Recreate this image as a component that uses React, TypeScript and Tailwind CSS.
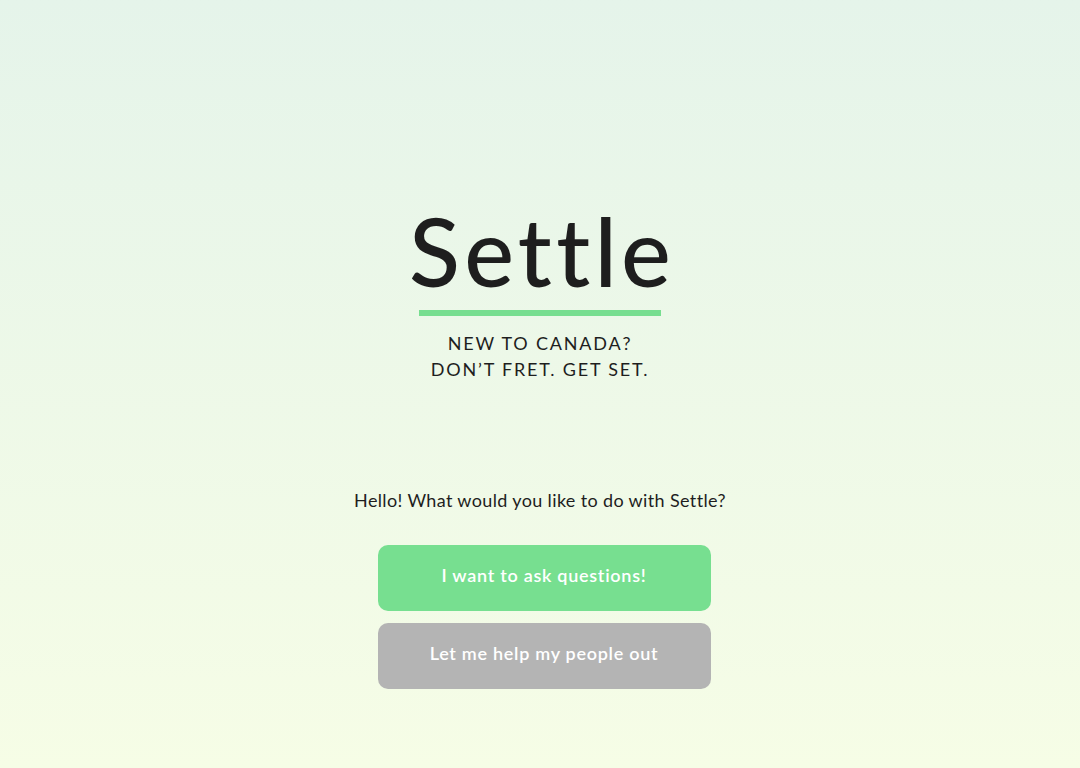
export default function App() {
  return (
    <div
      className="flex h-[768px] w-full flex-col items-center bg-gradient-to-b from-[#e5f4ea] to-[#f6fde6] text-[#1e1e1e]"
      style={{ fontFamily: "Lato, 'Noto Sans', sans-serif" }}
    >
      <h1 className="mt-[196px] pl-[0.045em] text-[94px] font-medium leading-[110px] tracking-[0.045em]">
        Settle
      </h1>
      <div className="mt-[4px] h-[6px] w-[242px] bg-[#77de90]" />
      <div className="mt-[14px] text-center text-[18px] leading-[26px] tracking-[0.1em]">
        <p>NEW TO CANADA?</p>
        <p>DON&rsquo;T FRET. GET SET.</p>
      </div>
      <p className="mt-[106px] text-[18px] leading-[24px] tracking-[0.02em]">
        Hello! What would you like to do with Settle?
      </p>
      <div className="mt-[33px] ml-2 flex flex-col gap-3">
        <button className="h-[66px] w-[333px] rounded-[10px] bg-[#77df90] pb-[5px] text-[18px] font-semibold tracking-[0.04em] text-white">
          I want to ask questions!
        </button>
        <button className="h-[66px] w-[333px] rounded-[10px] bg-[#b4b4b4] pb-[5px] text-[18px] font-semibold tracking-[0.04em] text-white">
          Let me help my people out
        </button>
      </div>
    </div>
  );
}
